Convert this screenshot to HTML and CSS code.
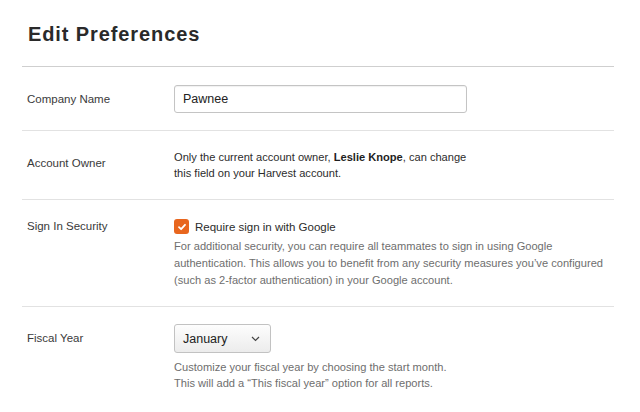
FILE: index.html
```html
<!DOCTYPE html>
<html>
<head>
<meta charset="utf-8">
<link rel="stylesheet" href="styles.css">
</head>
<body>
<div class="page">
  <h1 class="title">Edit Preferences</h1>
  <div class="rows">
    <div class="row">
      <div class="label">Company Name</div>
      <div class="field">
        <div class="input">Pawnee</div>
      </div>
    </div>
    <div class="row">
      <div class="label">Account Owner</div>
      <div class="field">
        <p class="text">Only the current account owner, <b>Leslie Knope</b>, can change<br>this field on your Harvest account.</p>
      </div>
    </div>
    <div class="row">
      <div class="label label-check">Sign In Security</div>
      <div class="field">
        <div class="check-line">
          <span class="checkbox"><svg width="10" height="10" viewBox="0 0 10 10"><path d="M2 5.2 L4.1 7.2 L8 2.8" fill="none" stroke="#fff" stroke-width="1.8" stroke-linecap="round" stroke-linejoin="round"/></svg></span>
          <span class="check-text">Require sign in with Google</span>
        </div>
        <p class="help">For additional security, you can require all teammates to sign in using Google<br>authentication. This allows you to benefit from any security measures you’ve configured<br>(such as 2-factor authentication) in your Google account.</p>
      </div>
    </div>
    <div class="row row-last">
      <div class="label">Fiscal Year</div>
      <div class="field">
        <div class="select"><span>January</span><svg width="9" height="6" viewBox="0 0 9 6"><path d="M1 1 L4.5 4.5 L8 1" fill="none" stroke="#444" stroke-width="1.2"/></svg></div>
        <p class="help help-fiscal">Customize your fiscal year by choosing the start month.<br>This will add a “This fiscal year” option for all reports.</p>
      </div>
    </div>
  </div>
</div>
</body>
</html>
```

FILE: styles.css
```css
html, body {
  margin: 0;
  padding: 0;
  background: #fff;
}
body {
  font-family: "Liberation Sans", Arial, sans-serif;
  color: #333;
  font-size: 11.5px;
}
.page {
  padding: 0 26px 0 22px;
}
.title {
  margin: 0;
  padding: 22px 0 20px 6px;
  font-size: 20px;
  line-height: 24px;
  font-weight: bold;
  letter-spacing: 0.9px;
  color: #2a2a2a;
}
.rows {
  border-top: 1px solid #cfcfcf;
}
.row {
  display: flex;
  padding: 18px 0 17px 5px;
  border-bottom: 1px solid #e2e2e2;
}
.row-last {
  border-bottom: none;
  padding-top: 17px;
}
.label {
  width: 147px;
  flex: none;
  padding-top: 6px;
  line-height: 17px;
  color: #3a3a3a;
}
.label-check {
  padding-top: 0;
}
.field {
  flex: 1;
  font-size: 11.1px;
  white-space: nowrap;
}
.input {
  width: 293px;
  height: 28px;
  box-sizing: border-box;
  border: 1px solid #c4c4c4;
  border-radius: 3px;
  padding: 0 8px;
  line-height: 26px;
  font-size: 12.5px;
  color: #222;
  box-shadow: inset 0 1px 1px rgba(0,0,0,0.06);
}
.text {
  margin: 0;
  padding-bottom: 1px;
  line-height: 16px;
  color: #2c2c2c;
}
.text b {
  color: #1e1e1e;
}
.check-line {
  display: flex;
  align-items: center;
  height: 17px;
}
.checkbox {
  width: 15px;
  height: 15px;
  border-radius: 3px;
  background: #e8661e;
  display: flex;
  align-items: center;
  justify-content: center;
  margin-right: 6px;
}
.check-text {
  color: #2c2c2c;
  font-size: 11.5px;
}
.help {
  margin: 3px 0 0;
  line-height: 17px;
  color: #6e6e6e;
}
.select {
  width: 97px;
  height: 29px;
  box-sizing: border-box;
  border: 1px solid #c2c2c2;
  border-radius: 3px;
  background: linear-gradient(#fdfdfd, #ececec);
  display: flex;
  align-items: center;
  justify-content: space-between;
  padding: 0 10px 0 8px;
  font-size: 12.5px;
  color: #222;
}
.help-fiscal {
  margin-top: 6px;
  line-height: 16px;
}
```
